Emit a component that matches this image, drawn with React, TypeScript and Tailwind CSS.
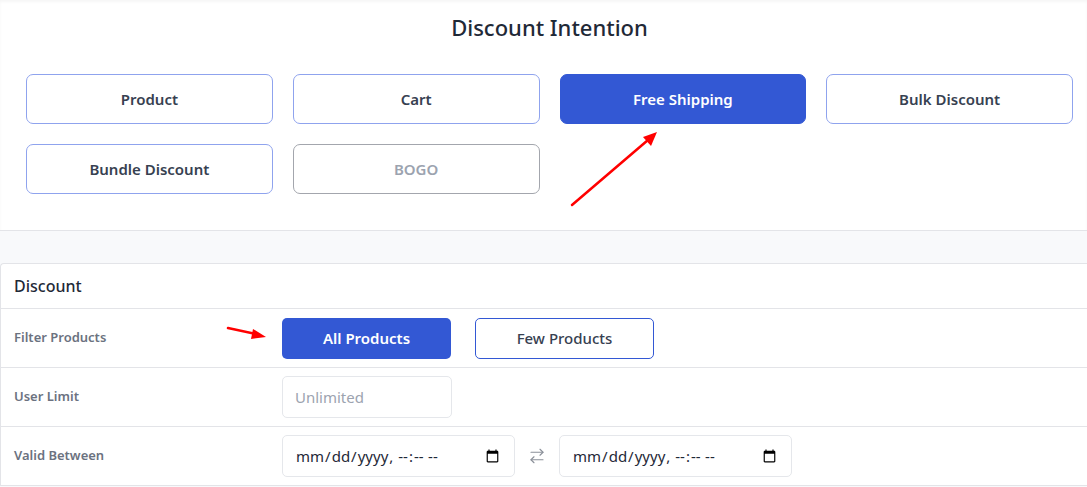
import React from "react";
import { ArrowRightLeft } from "lucide-react";

const intents = [
  { label: "Product", state: "normal" },
  { label: "Cart", state: "normal" },
  { label: "Free Shipping", state: "active" },
  { label: "Bulk Discount", state: "normal" },
  { label: "Bundle Discount", state: "normal" },
  { label: "BOGO", state: "disabled" },
];

function IntentButton({ label, state }: { label: string; state: string }) {
  const base =
    "h-[50px] rounded-[7px] border text-[15px] font-semibold flex items-center justify-center";
  if (state === "active")
    return (
      <button className={base + " bg-[#3358d4] border-[#3358d4] text-white"}>{label}</button>
    );
  if (state === "disabled")
    return (
      <button className={base + " bg-white border-[#a3a6ad] text-[#9ca3af]"}>{label}</button>
    );
  return (
    <button className={base + " bg-white border-[#8fa3ee] text-[#374151]"}>{label}</button>
  );
}

function Row({ label, children }: { label: string; children: React.ReactNode }) {
  return (
    <div className="grid grid-cols-[281px_1fr] items-center h-[59px] border-b border-[#e3e4e8]">
      <div className="pl-[13px] text-[13px] font-semibold text-[#6b7280]">{label}</div>
      <div className="flex items-center">{children}</div>
    </div>
  );
}

export default function App() {
  return (
    <div
      className="relative w-[1087px] h-[487px] overflow-hidden bg-[#f8f9fb]"
      style={{ fontFamily: '"Noto Sans", "Open Sans", sans-serif' }}
    >
      {/* Top section */}
      <div className="bg-white border-b border-[#e3e4e8] pl-[26px] pr-[14px] pt-[12px] pb-[36px] shadow-[inset_0_2px_3px_rgba(0,0,0,0.04)]">
        <h2 className="text-center text-[22px] leading-[31px] font-medium text-[#1f2937]">
          Discount Intention
        </h2>
        <div className="grid grid-cols-4 gap-5 mt-[31px]">
          {intents.map((i) => (
            <IntentButton key={i.label} label={i.label} state={i.state} />
          ))}
        </div>
      </div>

      {/* Gap */}
      <div className="h-[32px]" />

      {/* Card */}
      <div className="bg-white border-t border-l border-[#e3e4e8] rounded-tl-[4px]">
        <div className="h-[45px] flex items-center pl-[13px] border-b border-[#e3e4e8] text-[16px] font-medium text-[#1f2937]">
          Discount
        </div>
        <Row label="Filter Products">
          <button className="w-[169px] h-[41px] rounded-[5px] bg-[#3358d4] text-white text-[15px] font-semibold">
            All Products
          </button>
          <button className="ml-[24px] w-[179px] h-[41px] rounded-[5px] border border-[#3358d4] bg-white text-[#374151] text-[15px] font-medium">
            Few Products
          </button>
        </Row>
        <Row label="User Limit">
          <input
            placeholder="Unlimited"
            className="w-[170px] h-[42px] rounded-[5px] border border-[#e5e7eb] px-[12px] text-[15px] text-[#374151] placeholder:text-[#9ca3af] outline-none"
          />
        </Row>
        <Row label="Valid Between">
          <input
            type="datetime-local"
            className="w-[233px] h-[42px] rounded-[5px] border border-[#e5e7eb] px-[12px] text-[15px] text-[#1f2937] outline-none"
          />
          <div className="w-[44px] flex items-center justify-center text-[#8b9099]">
            <ArrowRightLeft size={18} strokeWidth={1.5} />
          </div>
          <input
            type="datetime-local"
            className="w-[233px] h-[42px] rounded-[5px] border border-[#e5e7eb] px-[12px] text-[15px] text-[#1f2937] outline-none"
          />
        </Row>
      </div>

      {/* Annotation arrows */}
      <svg className="absolute left-0 top-0 pointer-events-none" width="1087" height="487">
        <line x1="572" y1="205" x2="648" y2="140" stroke="#ff0000" strokeWidth="2.5" strokeLinecap="round" />
        <polygon points="657,132 643,137 651,146" fill="#ff0000" />
        <line x1="228" y1="328" x2="256" y2="334" stroke="#ff0000" strokeWidth="2.5" strokeLinecap="round" />
        <polygon points="266,337 253,329 251,339" fill="#ff0000" />
      </svg>
    </div>
  );
}
